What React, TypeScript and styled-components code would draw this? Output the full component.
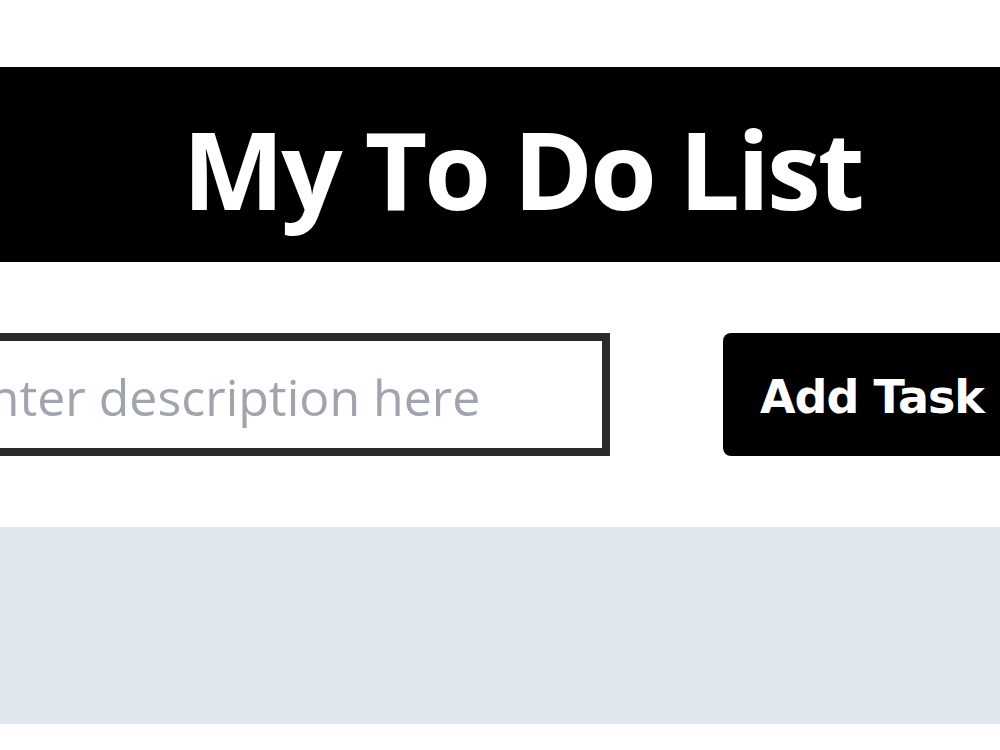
import React from "react";
import styled, { createGlobalStyle } from "styled-components";

const Global = createGlobalStyle`
  html, body { margin: 0; padding: 0; background: #ffffff; overflow: hidden; }
  body { font-family: "Open Sans", "Noto Sans", sans-serif; }
`;

const Page = styled.div`
  width: 1000px;
  height: 750px;
  padding-top: 67px;
  box-sizing: border-box;
  display: flex;
  flex-direction: column;
  overflow: hidden;
`;

const Header = styled.header`
  height: 195px;
  background: #000000;
  display: flex;
  align-items: center;
  justify-content: center;
  padding-left: 44px;
  padding-top: 9px;
  box-sizing: border-box;
`;

const Title = styled.h1`
  margin: 0;
  color: #ffffff;
  font-family: "Open Sans", "Noto Sans", sans-serif;
  font-weight: 700;
  font-size: 108px;
  line-height: 1;
  letter-spacing: -3px;
`;

const Form = styled.form`
  display: flex;
  align-items: stretch;
  gap: 113px;
  margin: 71px 0 0 -67px;
  height: 123px;
`;

const Input = styled.input`
  width: 677px;
  flex: none;
  box-sizing: border-box;
  border: 8px solid #2b2b2b;
  background: #ffffff;
  padding: 4px 20px 0;
  font-family: "Open Sans", "Noto Sans", sans-serif;
  font-size: 50px;
  color: #222;
  outline: none;
  &::placeholder { color: #a0a4ad; }
`;

const AddButton = styled.button`
  flex: none;
  width: 320px;
  box-sizing: border-box;
  border: none;
  border-radius: 8px;
  background: #000000;
  color: #ffffff;
  font-family: "DejaVu Sans", Verdana, sans-serif;
  font-weight: 700;
  font-size: 46px;
  letter-spacing: -1px;
  text-align: left;
  padding: 5px 0 0 37px;
  cursor: pointer;
`;

const TaskPanel = styled.section`
  margin-top: 71px;
  height: 197px;
  background: #e1e7ef;
`;

export default function App() {
  return (
    <>
      <Global />
      <Page>
        <Header>
          <Title>My To Do List</Title>
        </Header>
        <Form onSubmit={(e) => e.preventDefault()}>
          <Input type="text" placeholder="Enter description here" />
          <AddButton type="submit">Add Task</AddButton>
        </Form>
        <TaskPanel />
      </Page>
    </>
  );
}
